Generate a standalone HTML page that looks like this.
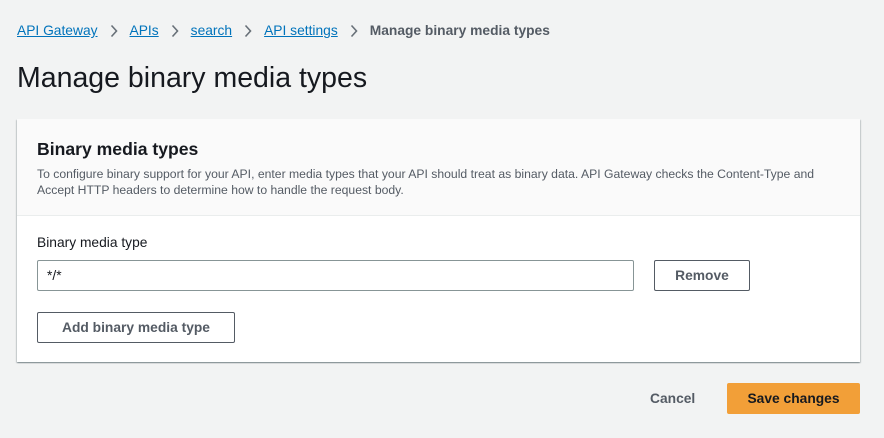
<!DOCTYPE html>
<html><head><style>
*{box-sizing:border-box;margin:0;padding:0}
body{width:884px;height:438px;background:#f2f3f3;font-family:"Liberation Sans",sans-serif;color:#16191f;position:relative;overflow:hidden}
.a{position:absolute;white-space:nowrap}
.bc{top:23px;left:17px;font-size:13.8px;display:flex;align-items:center}
.bc a{color:#0073bb;text-decoration:underline}
.bc svg{margin:0 12px}
.bc .c{color:#545b64;font-weight:bold}
h1{position:absolute;left:17px;top:62px;font-size:28.5px;font-weight:normal;color:#16191f}
.card{position:absolute;left:17px;top:119px;width:843px;height:243px;background:#fff;box-shadow:0 1px 1px rgba(0,28,36,.3),1px 1px 1px rgba(0,28,36,.15),-1px 1px 1px rgba(0,28,36,.15)}
.hd{height:97px;background:#fafafa;border-bottom:1px solid #eaeded;padding:20px 20px 0}
.hd h2{font-size:17.6px;font-weight:bold;margin-bottom:6px}
.hd p{font-size:12.2px;line-height:16px;color:#545b64}
.btn{position:absolute;border:1px solid #545b64;border-radius:2px;background:#fff;color:#545b64;font-weight:bold;font-size:13.8px;display:flex;align-items:center;justify-content:center}
</style></head><body>
<div class="a bc"><a>API Gateway</a><svg width="8" height="14" viewBox="0 0 8 14"><path d="M1.5 1.5 L6.5 7 L1.5 12.5" fill="none" stroke="#687078" stroke-width="1.6"/></svg><a>APIs</a><svg width="8" height="14" viewBox="0 0 8 14"><path d="M1.5 1.5 L6.5 7 L1.5 12.5" fill="none" stroke="#687078" stroke-width="1.6"/></svg><a>search</a><svg width="8" height="14" viewBox="0 0 8 14"><path d="M1.5 1.5 L6.5 7 L1.5 12.5" fill="none" stroke="#687078" stroke-width="1.6"/></svg><a>API settings</a><svg width="8" height="14" viewBox="0 0 8 14"><path d="M1.5 1.5 L6.5 7 L1.5 12.5" fill="none" stroke="#687078" stroke-width="1.6"/></svg><span class="c">Manage binary media types</span></div>
<h1>Manage binary media types</h1>
<div class="card">
<div class="hd"><h2>Binary media types</h2><p>To configure binary support for your API, enter media types that your API should treat as binary data. API Gateway checks the Content-Type and<br>Accept HTTP headers to determine how to handle the request body.</p></div>
</div>
<div class="a" style="left:37px;top:235px;font-size:13.8px">Binary media type</div>
<div class="a" style="left:37px;top:260px;width:597px;height:31px;border:1px solid #879596;border-radius:2px;padding:7px 9px;font-size:13.8px">*/*</div>
<div class="btn" style="left:654px;top:260px;width:96px;height:31px">Remove</div>
<div class="btn" style="left:37px;top:312px;width:198px;height:31px">Add binary media type</div>
<div class="a" style="left:650px;top:391px;font-size:13.8px;font-weight:bold;color:#545b64">Cancel</div>
<div class="a" style="left:727px;top:383px;width:133px;height:31px;background:#f29f38;border-radius:2px;color:#16191f;font-weight:bold;font-size:13.8px;display:flex;align-items:center;justify-content:center">Save changes</div>
</body></html>
